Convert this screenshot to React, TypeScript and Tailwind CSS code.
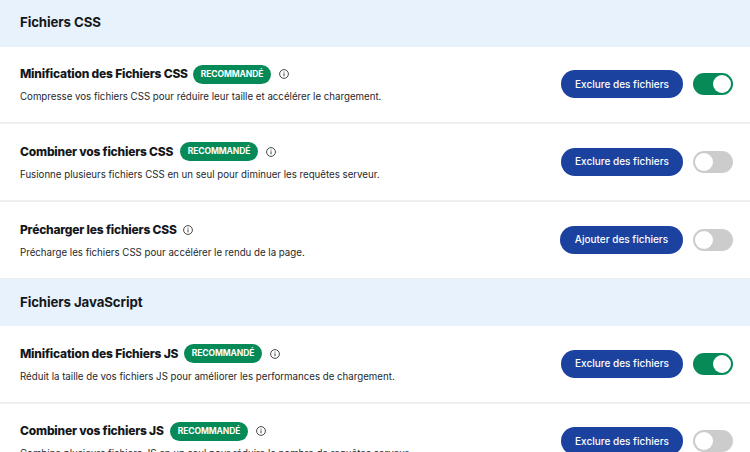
const font = { fontFamily: "Inter, 'Noto Sans', sans-serif" };

function Info() {
  return (
    <svg width="10" height="10" viewBox="0 0 10 10" fill="none" className="shrink-0 block">
      <circle cx="5" cy="5" r="4.4" stroke="#333" strokeWidth="0.9" />
      <rect x="4.55" y="4.3" width="0.9" height="3" fill="#333" />
      <rect x="4.55" y="2.6" width="0.9" height="0.95" fill="#333" />
    </svg>
  );
}

function Section({ title, tall }: { title: string; tall?: boolean }) {
  return (
    <div className={`shrink-0 bg-[#e7f2fc] pl-5 flex items-center ${tall ? "h-[47px]" : "h-[46.5px]"}`}>
      <h2 className="text-[13.25px] font-bold tracking-[-0.1px] text-[#15171a]">{title}</h2>
    </div>
  );
}

function Row({
  title,
  desc,
  rec,
  on,
  action = "Exclure des fichiers",
  titleWidth,
  border = true,
}: {
  title: string;
  desc: string;
  rec?: boolean;
  on?: boolean;
  action?: string;
  titleWidth: string;
  border?: boolean;
}) {
  return (
    <div className={`h-[77.5px] shrink-0 bg-white pl-5 pr-[17px] flex items-center justify-between ${border ? "border-b-2 border-[#eeeeee]" : "border-b border-[#e8edf2]"}`}>
      <div className="flex flex-col gap-[6.5px] pt-[0.5px]">
        <div className="flex items-center h-[19px]">
          <span className={`text-[12px] font-extrabold tracking-[-0.2px] text-[#15171a] whitespace-nowrap ${titleWidth}`}>{title}</span>
          {rec && (
            <span className="ml-[7px] mr-[8px] h-[19px] w-[78px] rounded-full bg-[#068a57] text-white text-[8.5px] font-bold flex items-center justify-center tracking-[-0.1px]">
              RECOMMANDÉ
            </span>
          )}
          <span className={rec ? "" : "ml-[8px]"}><Info /></span>
        </div>
        <p className="text-[9.7px] leading-[14px] text-[#25282b] whitespace-nowrap">{desc}</p>
      </div>
      <div className="flex items-center gap-[10px]">
        <button className={`h-[28px] rounded-full bg-[#1b429f] text-white text-[10px] font-medium flex items-center justify-center ${action.startsWith("Ajouter") ? "w-[123px]" : "w-[122px]"}`}>
          {action}
        </button>
        <div className={`h-[22px] w-[40px] rounded-full border-2 flex items-center ${on ? "bg-[#068a57] border-[#068a57] justify-end" : "bg-[#cccccc] border-[#cccccc] justify-start"}`}>
          <div className="w-[18px] h-[18px] rounded-full bg-white" />
        </div>
      </div>
    </div>
  );
}

export default function App() {
  return (
    <div className="w-[750px] h-[452px] overflow-hidden bg-white flex flex-col" style={font}>
      <Section title="Fichiers CSS" />
      <Row title="Minification des Fichiers CSS" desc="Compresse vos fichiers CSS pour réduire leur taille et accélérer le chargement." rec on titleWidth="w-[166px]" />
      <Row title="Combiner vos fichiers CSS" desc="Fusionne plusieurs fichiers CSS en un seul pour diminuer les requêtes serveur." rec titleWidth="w-[153px]" />
      <Row title="Précharger les fichiers CSS" desc="Précharge les fichiers CSS pour accélérer le rendu de la page." action="Ajouter des fichiers" titleWidth="w-[155px]" border={false} />
      <Section title="Fichiers JavaScript" tall />
      <Row title="Minification des Fichiers JS" desc="Réduit la taille de vos fichiers JS pour améliorer les performances de chargement." rec on titleWidth="w-[157px]" />
      <Row title="Combiner vos fichiers JS" desc="Combine plusieurs fichiers JS en un seul pour réduire le nombre de requêtes serveur." rec titleWidth="w-[143px]" />
    </div>
  );
}
